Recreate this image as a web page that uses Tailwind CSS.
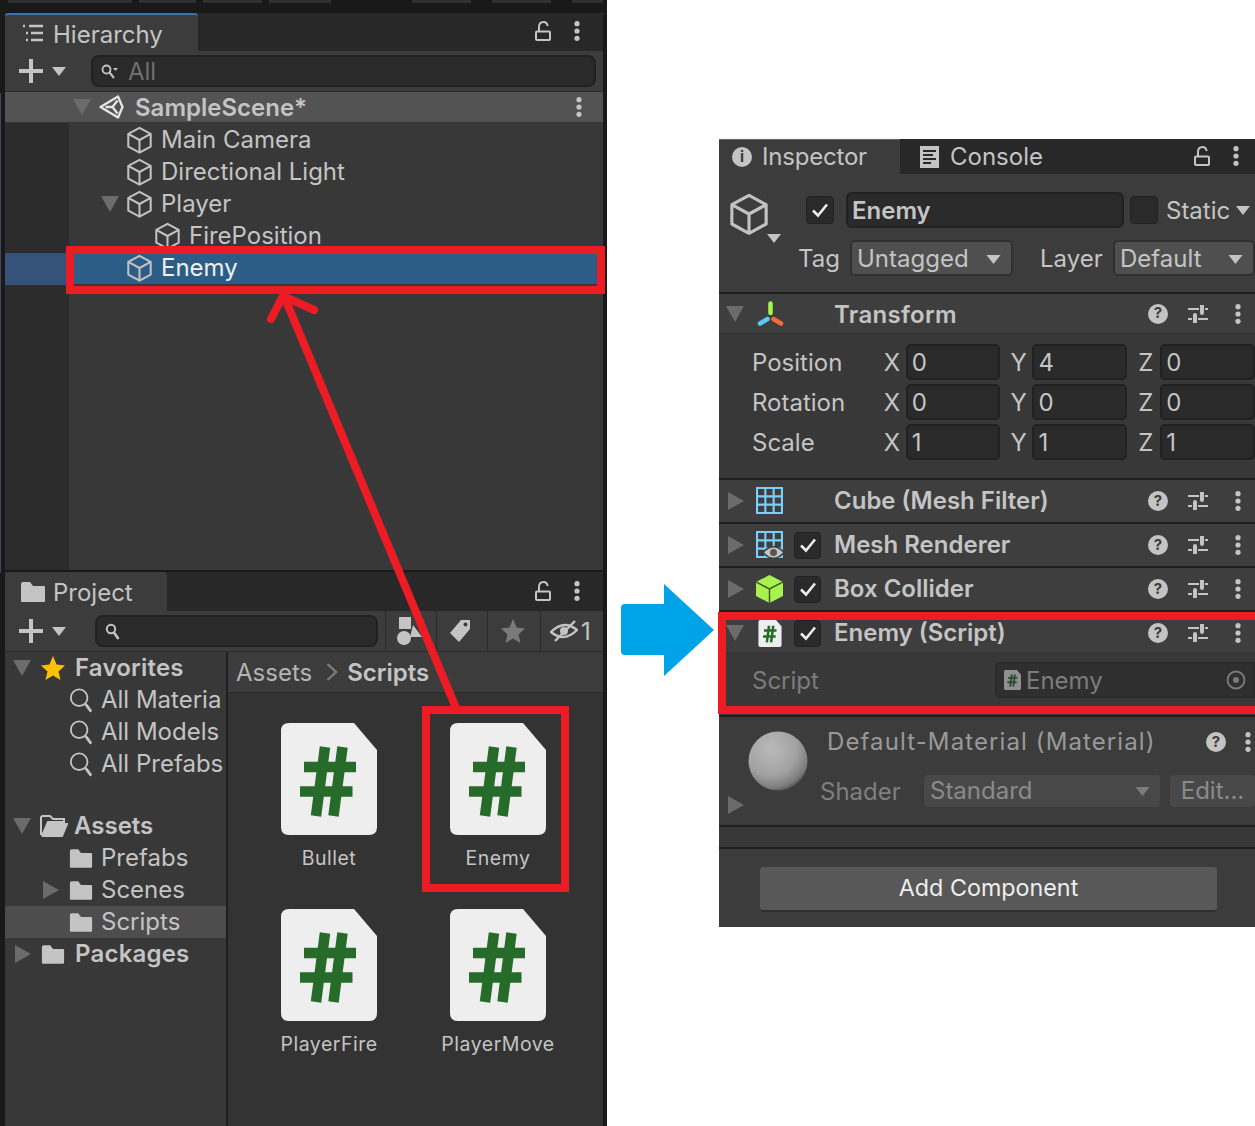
<!DOCTYPE html>
<html lang="en">
<head>
  <meta charset="UTF-8" />
  <title>Unity Editor - Enemy script</title>
  <script src="https://cdn.jsdelivr.net/npm/@tailwindcss/browser@4"></script>
</head>
<body class="bg-white">
  <!-- shared icons -->
  <svg class="hidden" xmlns="http://www.w3.org/2000/svg">
    <symbol id="cube" viewBox="0 0 28 30"><path d="M14 2 26 8.5V22L14 28.500 2 22V8.500ZM2 8.500 14 15 26 8.500M14 15V28.500" fill="none" stroke="#c2c2c2" stroke-width="2.200" stroke-linejoin="round"/></symbol>
    <symbol id="down" viewBox="0 0 18 16"><path d="M0 0H18L9 16Z" fill="#6b6b6b"/></symbol>
    <symbol id="right" viewBox="0 0 16 18"><path d="M0 0 16 9 0 18Z" fill="#6b6b6b"/></symbol>
    <symbol id="dots" viewBox="0 0 6 20"><circle cx="3" cy="2.700" r="2.600" fill="#c4c4c4"/><circle cx="3" cy="10" r="2.600" fill="#c4c4c4"/><circle cx="3" cy="17.300" r="2.600" fill="#c4c4c4"/></symbol>
    <symbol id="lock" viewBox="0 0 16 20"><rect x="1" y="10.500" width="14" height="8.500" rx="1" fill="none" stroke="#c4c4c4" stroke-width="2"/><path d="M4 10V6Q4 1 8.500 1 12 1 12.700 5" fill="none" stroke="#c4c4c4" stroke-width="2"/></symbol>
    <symbol id="sliders" viewBox="0 0 20 18"><path d="M0 4H11M17 4H20M0 14H4M10 14H20" stroke="#c4c4c4" stroke-width="2"/><path d="M14 0V8M7 10V18" stroke="#c4c4c4" stroke-width="4" stroke-linecap="round"/></symbol>
    <symbol id="folder" viewBox="0 0 26 22"><path d="M1 3Q1 1 3 1H10L13 5H24Q25 5 25 6V20Q25 21 24 21H2Q1 21 1 20Z" fill="#c4c4c4"/></symbol>
    <symbol id="search" viewBox="0 0 26 28"><circle cx="11" cy="11" r="9" fill="none" stroke="#c4c4c4" stroke-width="2"/><path d="M18 18 24 26" stroke="#c4c4c4" stroke-width="3"/></symbol>
    <symbol id="check" viewBox="0 0 18 16"><path d="M2 8.500 7 13.500 16 2.500" fill="none" stroke="#ededed" stroke-width="2.600"/></symbol>
    <symbol id="script" viewBox="0 0 96 112"><path d="M8 0H73L96 27V104Q96 112 88 112H8Q0 112 0 104V8Q0 0 8 0Z" fill="#eeeeee"/><path d="M44 24 35 93M61.500 24 52.500 93M23 44H75M19 68.500H71.500" fill="none" stroke="#266b2a" stroke-width="10.500"/></symbol>
    <symbol id="grid" viewBox="0 0 26 26"><path d="M1 1H25V25H1ZM9 1V25M17 1V25M1 9H25M1 17H25" fill="none" stroke="#79d0fb" stroke-width="2"/></symbol>
  </svg>

  <div class="relative w-[1255px] h-[1126px] overflow-hidden flex items-start font-['Inter','Liberation_Sans',sans-serif] text-[#c4c4c4]">

    <!-- left editor column -->
    <div class="w-[607px] h-[1126px] shrink-0 bg-[#191919] pl-[5px] pr-[4px] flex flex-col">
      <div class="h-[13px] flex gap-[7px] items-start -ml-[5px] pl-[8px]">
        <div class="w-[127px] h-[3px] bg-[#303030]"></div>
        <div class="w-[58px] h-[3px] bg-[#303030]"></div>
        <div class="w-[60px] h-[3px] bg-[#303030]"></div>
        <div class="w-[64px] h-[3px] bg-[#303030]"></div>
        <div class="w-[60px] h-[3px] ml-[74px] bg-[#303030]"></div>
        <div class="w-[60px] h-[3px] ml-[14px] bg-[#303030]"></div>
        <div class="w-[32px] h-[3px] ml-[14px] bg-[#303030]"></div>
      </div>

      <!-- Hierarchy -->
      <section class="h-[557px] flex flex-col bg-[#383838]">
        <div class="h-[38px] flex items-stretch bg-[#282828] rounded-t-[4px]">
          <div class="w-[193px] bg-[#3c3c3c] border-t-2 border-[#3a72b0] rounded-t-[4px] flex items-center pl-[17px] gap-[9px] text-[24px]">
            <svg class="w-[22px] h-[18px]" viewBox="0 0 22 18"><path d="M1 2H3M7 2H21M4 9H6M9 9H21M4 16H6M9 16H21" stroke="#c4c4c4" stroke-width="2.400"/></svg>
            <span class="pt-[3px]">Hierarchy</span>
          </div>
          <div class="flex-1 flex items-center justify-end gap-[23px] pr-[23px] pb-[2px]">
            <svg class="w-[16px] h-[20px]"><use href="#lock"/></svg>
            <svg class="w-[6px] h-[20px]"><use href="#dots"/></svg>
          </div>
        </div>
        <div class="h-[41px] bg-[#3c3c3c] border-b border-[#2a2a2a] flex items-center pl-[14px] pr-[7px]">
          <svg class="w-[24px] h-[24px]" viewBox="0 0 24 24"><path d="M12 0V24M0 12H24" stroke="#c4c4c4" stroke-width="4"/></svg>
          <svg class="w-[14px] h-[9px] ml-[9px]" viewBox="0 0 14 9"><path d="M0 0H14L7 9Z" fill="#c4c4c4"/></svg>
          <div class="ml-[25px] flex-1 h-[32px] rounded-[8px] bg-[#2a2a2a] border-2 border-[#212121] flex items-center pl-[8px] gap-[10px] text-[24px] text-[#6f6f6f]">
            <svg class="w-[17px] h-[15px]" viewBox="0 0 17 15"><circle cx="5.500" cy="5.500" r="4" fill="none" stroke="#c4c4c4" stroke-width="1.800"/><path d="M8.500 8.500 13 14" stroke="#c4c4c4" stroke-width="2"/><path d="M12 4H17L14.500 7Z" fill="#c4c4c4"/></svg>
            <span class="pt-[2px]">All</span>
          </div>
        </div>
        <div class="h-[31px] bg-[#535353] flex items-center pl-[68px] text-[24px] font-semibold border-b border-[#353535]">
          <svg class="w-[18px] h-[16px]"><use href="#down"/></svg>
          <svg class="w-[25px] h-[24px] ml-[8px]" viewBox="0 0 25 24"><path d="M1.500 12 19 1.500 23.500 12 19 22.500ZM6.500 12H13.500L18.500 5.500M13.500 12 18.500 18.500" fill="none" stroke="#e6e6e6" stroke-width="2.300" stroke-linejoin="round"/></svg>
          <span class="ml-[11px] pt-[2px]">SampleScene*</span>
          <svg class="w-[6px] h-[20px] ml-auto mr-[21px]"><use href="#dots"/></svg>
        </div>
        <div class="flex-1 flex min-h-0">
          <div class="w-[64px] bg-[#2c2c2c] pt-[130px]">
            <div class="h-[32px] bg-[#34527a]"></div>
          </div>
          <div class="flex-1 text-[24px] pt-[1px]">
            <div class="h-[32px] flex items-center pl-[57px] gap-[8px]"><svg class="w-[27px] h-[28px]"><use href="#cube"/></svg><span>Main Camera</span></div>
            <div class="h-[32px] flex items-center pl-[57px] gap-[8px]"><svg class="w-[27px] h-[28px]"><use href="#cube"/></svg><span>Directional Light</span></div>
            <div class="h-[32px] flex items-center pl-[32px]"><svg class="w-[18px] h-[16px]"><use href="#down"/></svg><svg class="w-[27px] h-[28px] ml-[7px]"><use href="#cube"/></svg><span class="ml-[8px]">Player</span></div>
            <div class="h-[32px] flex items-center pl-[85px] gap-[8px]"><svg class="w-[27px] h-[28px]"><use href="#cube"/></svg><span>FirePosition</span></div>
            <div class="h-[32px] flex items-center pl-[57px] gap-[8px] bg-[#2c5d87] text-[#f0f0f0]"><svg class="w-[27px] h-[28px]"><use href="#cube"/></svg><span>Enemy</span></div>
          </div>
        </div>
      </section>

      <div class="h-[2px]"></div>

      <!-- Project -->
      <section class="flex-1 flex flex-col bg-[#383838] min-h-0">
        <div class="h-[39px] flex items-stretch bg-[#282828] rounded-t-[4px]">
          <div class="w-[162px] bg-[#3c3c3c] rounded-t-[4px] flex items-center pl-[15px] gap-[7px] text-[24px]">
            <svg class="w-[26px] h-[22px]"><use href="#folder"/></svg>
            <span class="pt-[3px]">Project</span>
          </div>
          <div class="flex-1 flex items-center justify-end gap-[23px] pr-[23px] pb-[2px]">
            <svg class="w-[16px] h-[20px]"><use href="#lock"/></svg>
            <svg class="w-[6px] h-[20px]"><use href="#dots"/></svg>
          </div>
        </div>
        <div class="h-[41px] bg-[#3c3c3c] border-b border-[#2a2a2a] flex items-center pl-[14px]">
          <svg class="w-[24px] h-[24px]" viewBox="0 0 24 24"><path d="M12 0V24M0 12H24" stroke="#c4c4c4" stroke-width="4"/></svg>
          <svg class="w-[14px] h-[9px] ml-[9px]" viewBox="0 0 14 9"><path d="M0 0H14L7 9Z" fill="#c4c4c4"/></svg>
          <div class="ml-[29px] w-[283px] h-[32px] rounded-[8px] bg-[#2a2a2a] border-2 border-[#212121] flex items-center pl-[8px]">
            <svg class="w-[15px] h-[17px]" viewBox="0 0 15 17"><circle cx="6" cy="6" r="4.200" fill="none" stroke="#c4c4c4" stroke-width="2"/><path d="M9 9.500 13.500 16" stroke="#c4c4c4" stroke-width="2.600"/></svg>
          </div>
          <div class="ml-[7px] h-full flex items-stretch">
            <div class="w-[51px] border-l border-[#2a2a2a] flex items-center justify-center pr-[4px]">
              <svg class="w-[25px] h-[29px]" viewBox="0 0 25 29"><path d="M2 0H14V12H2Z" fill="#c4c4c4"/><circle cx="7" cy="21" r="7" fill="#c4c4c4"/><path d="M16 8 25 20H13Z" fill="#c4c4c4"/></svg>
            </div>
            <div class="w-[51px] border-l border-[#2a2a2a] flex items-center justify-center pr-[4px]">
              <svg class="w-[22px] h-[24px]" viewBox="0 0 22 24"><path d="M12 1H21V10L10 23 1 14Z" fill="#c4c4c4"/><circle cx="16.500" cy="5.500" r="2" fill="#3c3c3c"/></svg>
            </div>
            <div class="w-[53px] border-l border-[#2a2a2a] flex items-center justify-center pr-[2px]">
              <svg class="w-[24px] h-[24px]" viewBox="0 0 24 24"><path d="M12 0 15.500 8.500 24 9.500 17.500 15.500 19.500 24 12 19.500 4.500 24 6.500 15.500 0 9.500 8.500 8.500Z" fill="#7a7a7a"/></svg>
            </div>
            <div class="w-[63px] border-l border-[#2a2a2a] flex items-center pl-[9px] gap-[3px] text-[24px]">
              <svg class="w-[28px] h-[24px]" viewBox="0 0 28 24"><path d="M1 13Q14 0 27 11 14 24 1 13Z" fill="none" stroke="#c4c4c4" stroke-width="2.400"/><circle cx="14" cy="12" r="4" fill="#c4c4c4"/><path d="M5 22 25 2" stroke="#c4c4c4" stroke-width="2.400"/></svg>
              <span class="pt-[2px]">1</span>
            </div>
          </div>
        </div>
        <div class="flex-1 flex min-h-0">
          <!-- folder tree -->
          <div class="w-[221px] shrink-0 text-[24px] overflow-hidden">
            <div class="h-[32px] flex items-center pl-[8px] font-semibold"><svg class="w-[18px] h-[16px]"><use href="#down"/></svg><svg class="w-[24px] h-[24px] ml-[10px]" viewBox="0 0 24 24"><path d="M12 0 15.500 8.500 24 9.500 17.500 15.500 19.500 24 12 19.500 4.500 24 6.500 15.500 0 9.500 8.500 8.500Z" fill="#fdc006"/></svg><span class="ml-[10px] tracking-[0.2px]">Favorites</span></div>
            <div class="h-[32px] flex items-center pl-[64px] pr-[5px] gap-[8px] whitespace-nowrap"><svg class="w-[24px] h-[27px] shrink-0"><use href="#search"/></svg><span class="min-w-0 overflow-hidden">All Materials</span></div>
            <div class="h-[32px] flex items-center pl-[64px] gap-[8px] whitespace-nowrap"><svg class="w-[24px] h-[27px] shrink-0"><use href="#search"/></svg><span>All Models</span></div>
            <div class="h-[32px] flex items-center pl-[64px] gap-[8px] whitespace-nowrap"><svg class="w-[24px] h-[27px] shrink-0"><use href="#search"/></svg><span>All Prefabs</span></div>
            <div class="h-[30px]"></div>
            <div class="h-[32px] flex items-center pl-[8px] font-semibold"><svg class="w-[18px] h-[16px]"><use href="#down"/></svg><svg class="w-[28px] h-[22px] ml-[9px]" viewBox="0 0 28 22"><path d="M1 20V3Q1 1 3 1H10L13 4H24V7H8L2 21M3 21 8.500 9H27L22 21Z" fill="none" stroke="#c4c4c4" stroke-width="2"/><path d="M3 21 8.500 9H27L22 21Z" fill="#c4c4c4"/></svg><span class="ml-[6px]">Assets</span></div>
            <div class="h-[32px] flex items-center pl-[64px] gap-[8px]"><svg class="w-[24px] h-[21px]"><use href="#folder"/></svg><span>Prefabs</span></div>
            <div class="h-[32px] flex items-center pl-[38px]"><svg class="w-[16px] h-[18px]"><use href="#right"/></svg><svg class="w-[24px] h-[21px] ml-[10px]"><use href="#folder"/></svg><span class="ml-[8px]">Scenes</span></div>
            <div class="h-[32px] flex items-center pl-[64px] gap-[8px] bg-[#4d4d4d]"><svg class="w-[24px] h-[21px]"><use href="#folder"/></svg><span>Scripts</span></div>
            <div class="h-[32px] flex items-center pl-[10px] font-semibold"><svg class="w-[16px] h-[18px]"><use href="#right"/></svg><svg class="w-[24px] h-[21px] ml-[10px]"><use href="#folder"/></svg><span class="ml-[10px] tracking-[0.2px]">Packages</span></div>
          </div>
          <div class="w-[2px] shrink-0 bg-[#1f1f1f]"></div>
          <!-- asset grid -->
          <div class="flex-1 min-w-0 flex flex-col bg-[#333333]">
            <div class="h-[41px] bg-[#3c3c3c] border-b border-[#2a2a2a] flex items-center pl-[8px] text-[24px]">
              <span class="text-[#b4b4b4] pt-[2px]">Assets</span>
              <svg class="w-[12px] h-[18px] ml-[14px]" viewBox="0 0 12 18"><path d="M1.500 1 10 9 1.500 17" fill="none" stroke="#7c7c7c" stroke-width="2.400"/></svg>
              <span class="ml-[9px] font-semibold pt-[2px]">Scripts</span>
            </div>
            <div class="pl-[53px] pt-[30px] grid grid-cols-[169px_169px] grid-rows-[186px_186px] text-[19.500px] tracking-[0.5px]">
              <div class="w-[96px] flex flex-col items-center"><svg class="w-[96px] h-[112px] shrink-0"><use href="#script"/></svg><span class="mt-[9px]">Bullet</span></div>
              <div class="w-[96px] flex flex-col items-center"><svg class="w-[96px] h-[112px] shrink-0"><use href="#script"/></svg><span class="mt-[9px]">Enemy</span></div>
              <div class="w-[96px] flex flex-col items-center"><svg class="w-[96px] h-[112px] shrink-0"><use href="#script"/></svg><span class="mt-[9px] whitespace-nowrap">PlayerFire</span></div>
              <div class="w-[96px] flex flex-col items-center"><svg class="w-[96px] h-[112px] shrink-0"><use href="#script"/></svg><span class="mt-[9px] whitespace-nowrap">PlayerMove</span></div>
            </div>
          </div>
        </div>
      </section>
    </div>

    <!-- Inspector -->
    <section class="ml-[112px] mt-[139px] w-[536px] h-[788px] shrink-0 bg-[#3c3c3c] flex flex-col overflow-hidden text-[24px]">
      <div class="h-[35px] shrink-0 flex items-stretch bg-[#282828]">
        <div class="w-[181px] bg-[#3c3c3c] border-t border-[#3a72b0] flex items-center pl-[13px] gap-[10px]">
          <span class="w-[20px] h-[20px] rounded-full bg-[#c4c4c4] text-[#3c3c3c] text-[15px] font-bold flex items-center justify-center">i</span>
          <span class="tracking-[-0.2px]">Inspector</span>
        </div>
        <div class="flex items-center pl-[19px] gap-[10px]">
          <svg class="w-[21px] h-[22px]" viewBox="0 0 21 22"><path d="M1 0H20V22H1Z" fill="#c4c4c4"/><path d="M4 5H17M4 9H14M4 13H17M4 17H12" stroke="#282828" stroke-width="2"/></svg>
          <span>Console</span>
        </div>
        <div class="flex-1 flex items-center justify-end gap-[23px] pr-[16px] pb-[2px]">
          <svg class="w-[16px] h-[20px]"><use href="#lock"/></svg>
          <svg class="w-[6px] h-[20px]"><use href="#dots"/></svg>
        </div>
      </div>

      <!-- object header -->
      <div class="h-[118px] shrink-0 relative pl-[10px] pt-[18px] flex">
        <div class="w-[50px] shrink-0 relative">
          <svg class="w-[40px] h-[44px]"><use href="#cube"/></svg>
          <svg class="absolute left-[38px] top-[42px] w-[14px] h-[9px]" viewBox="0 0 14 9"><path d="M0 0H14L7 9Z" fill="#c4c4c4"/></svg>
        </div>
        <div class="flex-1 flex flex-col">
          <div class="h-[36px] flex items-center pl-[27px]">
            <div class="w-[28px] h-[28px] rounded-[4px] bg-[#2a2a2a] border border-[#212121] flex items-center justify-center"><svg class="w-[18px] h-[16px]"><use href="#check"/></svg></div>
            <div class="ml-[12px] w-[278px] h-[36px] rounded-[6px] bg-[#2a2a2a] border-2 border-[#212121] flex items-center pl-[4px] pt-[2px] font-semibold">Enemy</div>
            <div class="ml-[6px] w-[28px] h-[28px] rounded-[4px] bg-[#2a2a2a] border border-[#212121]"></div>
            <span class="ml-[8px] pt-[2px]">Static</span>
            <svg class="w-[14px] h-[9px] ml-[6px] shrink-0" viewBox="0 0 14 9"><path d="M0 0H14L7 9Z" fill="#c4c4c4"/></svg>
          </div>
          <div class="h-[36px] mt-[12px] flex items-center pl-[19px]">
            <span class="w-[52px] pt-[2px]">Tag</span>
            <div class="w-[163px] h-[36px] rounded-[5px] bg-[#4f4f4f] border-2 border-[#303030] flex items-center pl-[5px] pt-[2px]"><span>Untagged</span><svg class="w-[15px] h-[9px] ml-auto mr-[10px]" viewBox="0 0 14 9"><path d="M0 0H14L7 9Z" fill="#c4c4c4"/></svg></div>
            <span class="ml-[27px] w-[73px] pt-[2px]">Layer</span>
            <div class="w-[142px] h-[36px] rounded-[5px] bg-[#4f4f4f] border-2 border-[#303030] flex items-center pl-[5px] pt-[2px]"><span>Default</span><svg class="w-[15px] h-[9px] ml-auto mr-[10px]" viewBox="0 0 14 9"><path d="M0 0H14L7 9Z" fill="#c4c4c4"/></svg></div>
          </div>
        </div>
      </div>
      <div class="h-[2px] shrink-0 bg-[#1f1f1f]"></div>

      <!-- Transform -->
      <div class="h-[40px] shrink-0 flex items-center bg-[#3e3e3e] border-b border-[#333333]">
        <div class="w-[36px] pl-[7px]"><svg class="block w-[18px] h-[16px]"><use href="#down"/></svg></div>
        <div class="w-[79px]"><svg class="block w-[27px] h-[25px] ml-[2px]" viewBox="0 0 27 25"><path d="M13.500 2.500V12" stroke="#a4f54d" stroke-width="4.500" stroke-linecap="round"/><path d="M10.500 18 3 22.500" stroke="#5cc8f5" stroke-width="4.500" stroke-linecap="round"/><path d="M16.500 18 24 22.500" stroke="#f26a36" stroke-width="4.500" stroke-linecap="round"/></svg></div>
        <span class="flex-1 font-semibold pt-[2px] tracking-[0.3px]">Transform</span>
        <div class="w-[40px] flex justify-center"><span class="w-[20px] h-[20px] rounded-full bg-[#c4c4c4] text-[#3c3c3c] text-[15px] font-bold flex items-center justify-center">?</span></div>
        <div class="w-[40px] flex justify-center"><svg class="w-[20px] h-[18px]"><use href="#sliders"/></svg></div>
        <div class="w-[37px] flex justify-center pl-[3px]"><svg class="w-[6px] h-[20px]"><use href="#dots"/></svg></div>
      </div>
      <div class="h-[144px] shrink-0 bg-[#383838] pt-[10px] pl-[33px] flex flex-col gap-[4px]">
        <div class="h-[36px] flex items-center"><span class="w-[132px] pt-[2px]">Position</span><span class="w-[22px] pt-[2px]">X</span><div class="w-[95px] h-[36px] rounded-[5px] bg-[#2a2a2a] border-2 border-[#212121] flex items-center pl-[4px] pt-[2px]">0</div><span class="w-[32px] pl-[10px] pt-[2px]">Y</span><div class="w-[95px] h-[36px] rounded-[5px] bg-[#2a2a2a] border-2 border-[#212121] flex items-center pl-[4px] pt-[2px]">4</div><span class="w-[33px] pl-[11px] pt-[2px]">Z</span><div class="w-[95px] h-[36px] rounded-[5px] bg-[#2a2a2a] border-2 border-[#212121] flex items-center pl-[4px] pt-[2px]">0</div></div>
        <div class="h-[36px] flex items-center"><span class="w-[132px] pt-[2px]">Rotation</span><span class="w-[22px] pt-[2px]">X</span><div class="w-[95px] h-[36px] rounded-[5px] bg-[#2a2a2a] border-2 border-[#212121] flex items-center pl-[4px] pt-[2px]">0</div><span class="w-[32px] pl-[10px] pt-[2px]">Y</span><div class="w-[95px] h-[36px] rounded-[5px] bg-[#2a2a2a] border-2 border-[#212121] flex items-center pl-[4px] pt-[2px]">0</div><span class="w-[33px] pl-[11px] pt-[2px]">Z</span><div class="w-[95px] h-[36px] rounded-[5px] bg-[#2a2a2a] border-2 border-[#212121] flex items-center pl-[4px] pt-[2px]">0</div></div>
        <div class="h-[36px] flex items-center"><span class="w-[132px] pt-[2px]">Scale</span><span class="w-[22px] pt-[2px]">X</span><div class="w-[95px] h-[36px] rounded-[5px] bg-[#2a2a2a] border-2 border-[#212121] flex items-center pl-[4px] pt-[2px]">1</div><span class="w-[32px] pl-[10px] pt-[2px]">Y</span><div class="w-[95px] h-[36px] rounded-[5px] bg-[#2a2a2a] border-2 border-[#212121] flex items-center pl-[4px] pt-[2px]">1</div><span class="w-[33px] pl-[11px] pt-[2px]">Z</span><div class="w-[95px] h-[36px] rounded-[5px] bg-[#2a2a2a] border-2 border-[#212121] flex items-center pl-[4px] pt-[2px]">1</div></div>
      </div>
      <div class="h-[2px] shrink-0 bg-[#1f1f1f]"></div>

      <!-- Mesh Filter -->
      <div class="h-[42px] shrink-0 flex items-center bg-[#3e3e3e]">
        <div class="w-[36px] pl-[9px]"><svg class="block w-[16px] h-[18px]"><use href="#right"/></svg></div>
        <div class="w-[79px]"><svg class="block w-[27px] h-[27px] ml-[1px] mb-[2px]"><use href="#grid"/></svg></div>
        <span class="flex-1 font-semibold">Cube (Mesh Filter)</span>
        <div class="w-[40px] flex justify-center"><span class="w-[20px] h-[20px] rounded-full bg-[#c4c4c4] text-[#3c3c3c] text-[15px] font-bold flex items-center justify-center">?</span></div>
        <div class="w-[40px] flex justify-center"><svg class="w-[20px] h-[18px]"><use href="#sliders"/></svg></div>
        <div class="w-[37px] flex justify-center pl-[3px]"><svg class="w-[6px] h-[20px]"><use href="#dots"/></svg></div>
      </div>
      <div class="h-[2px] shrink-0 bg-[#1f1f1f]"></div>

      <!-- Mesh Renderer -->
      <div class="h-[42px] shrink-0 flex items-center bg-[#3e3e3e]">
        <div class="w-[36px] pl-[9px]"><svg class="block w-[16px] h-[18px]"><use href="#right"/></svg></div>
        <div class="w-[39px] relative"><svg class="block w-[27px] h-[27px] ml-[1px] mb-[2px]"><use href="#grid"/></svg><svg class="absolute left-[7px] top-[14px] w-[23px] h-[15px]" viewBox="0 0 23 15"><path d="M1 7.500Q11.500 -4 22 7.500 11.500 19 1 7.500Z" fill="#c4c4c4" stroke="#3e3e3e" stroke-width="1.500"/><circle cx="11.500" cy="7.500" r="3.500" fill="#555555"/></svg></div>
        <div class="w-[40px]"><div class="w-[27px] h-[27px] rounded-[4px] bg-[#2a2a2a] border border-[#212121] flex items-center justify-center"><svg class="w-[18px] h-[16px]"><use href="#check"/></svg></div></div>
        <span class="flex-1 font-semibold">Mesh Renderer</span>
        <div class="w-[40px] flex justify-center"><span class="w-[20px] h-[20px] rounded-full bg-[#c4c4c4] text-[#3c3c3c] text-[15px] font-bold flex items-center justify-center">?</span></div>
        <div class="w-[40px] flex justify-center"><svg class="w-[20px] h-[18px]"><use href="#sliders"/></svg></div>
        <div class="w-[37px] flex justify-center pl-[3px]"><svg class="w-[6px] h-[20px]"><use href="#dots"/></svg></div>
      </div>
      <div class="h-[2px] shrink-0 bg-[#1f1f1f]"></div>

      <!-- Box Collider -->
      <div class="h-[42px] shrink-0 flex items-center bg-[#3e3e3e]">
        <div class="w-[36px] pl-[9px]"><svg class="block w-[16px] h-[18px]"><use href="#right"/></svg></div>
        <div class="w-[39px]"><svg class="block w-[27px] h-[28px] ml-[1px]" viewBox="0 0 27 28"><path d="M13.500 0 27 7V21L13.500 28 0 21V7Z" fill="#a8f24e"/><path d="M0 7 13.500 14 27 7M13.500 14V28" fill="none" stroke="#3e5a22" stroke-width="1.500"/></svg></div>
        <div class="w-[40px]"><div class="w-[27px] h-[27px] rounded-[4px] bg-[#2a2a2a] border border-[#212121] flex items-center justify-center"><svg class="w-[18px] h-[16px]"><use href="#check"/></svg></div></div>
        <span class="flex-1 font-semibold">Box Collider</span>
        <div class="w-[40px] flex justify-center"><span class="w-[20px] h-[20px] rounded-full bg-[#c4c4c4] text-[#3c3c3c] text-[15px] font-bold flex items-center justify-center">?</span></div>
        <div class="w-[40px] flex justify-center"><svg class="w-[20px] h-[18px]"><use href="#sliders"/></svg></div>
        <div class="w-[37px] flex justify-center pl-[3px]"><svg class="w-[6px] h-[20px]"><use href="#dots"/></svg></div>
      </div>
      <div class="h-[2px] shrink-0 bg-[#1f1f1f]"></div>

      <!-- Enemy (Script) -->
      <div class="h-[41px] shrink-0 flex items-center bg-[#3e3e3e] border-b border-[#333333] pt-[2px]">
        <div class="w-[36px] pl-[7px]"><svg class="block w-[18px] h-[16px]"><use href="#down"/></svg></div>
        <div class="w-[39px]"><svg class="block w-[24px] h-[27px] ml-[3px]"><use href="#script"/></svg></div>
        <div class="w-[40px]"><div class="w-[27px] h-[27px] rounded-[4px] bg-[#2a2a2a] border border-[#212121] flex items-center justify-center"><svg class="w-[18px] h-[16px]"><use href="#check"/></svg></div></div>
        <span class="flex-1 font-semibold">Enemy (Script)</span>
        <div class="w-[40px] flex justify-center"><span class="w-[20px] h-[20px] rounded-full bg-[#c4c4c4] text-[#3c3c3c] text-[15px] font-bold flex items-center justify-center">?</span></div>
        <div class="w-[40px] flex justify-center"><svg class="w-[20px] h-[18px]"><use href="#sliders"/></svg></div>
        <div class="w-[37px] flex justify-center pl-[3px]"><svg class="w-[6px] h-[20px]"><use href="#dots"/></svg></div>
      </div>
      <div class="h-[62px] shrink-0 bg-[#383838] pl-[33px] pt-[9px] flex text-[#7c7c7c]">
        <span class="w-[243px] h-[36px] flex items-center pt-[2px]">Script</span>
        <div class="flex-1 h-[36px] rounded-l-[5px] bg-[#2f2f2f] border-2 border-[#2a2a2a] flex items-center pl-[7px]">
          <svg class="w-[17px] h-[22px] opacity-50"><use href="#script"/></svg>
          <span class="ml-[5px] pt-[2px]">Enemy</span>
          <svg class="w-[20px] h-[20px] ml-auto mr-[7px]" viewBox="0 0 20 20"><circle cx="10" cy="10" r="8.500" fill="none" stroke="#7c7c7c" stroke-width="1.800"/><circle cx="10" cy="10" r="3" fill="#7c7c7c"/></svg>
        </div>
      </div>
      <div class="h-[2px] shrink-0 bg-[#1f1f1f]"></div>

      <!-- Material -->
      <div class="h-[108px] shrink-0 relative flex">
        <div class="w-[100px] shrink-0 relative">
          <svg class="absolute left-[29px] top-[14px] w-[60px] h-[60px]" viewBox="0 0 60 60"><defs><radialGradient id="ball" cx="0.380" cy="0.300" r="0.800"><stop offset="0" stop-color="#bababa"/><stop offset="0.550" stop-color="#a2a2a2"/><stop offset="0.820" stop-color="#7c7c7c"/><stop offset="1" stop-color="#303030"/></radialGradient></defs><circle cx="30" cy="30" r="29.500" fill="url(#ball)"/></svg>
          <svg class="absolute left-[9px] top-[79px] w-[16px] h-[18px]"><use href="#right"/></svg>
        </div>
        <div class="flex-1 flex flex-col text-[#999999] min-w-0">
          <div class="h-[50px] flex items-center pl-[8px] tracking-[1.100px]">
            <span class="whitespace-nowrap">Default-Material (Material)</span>
            <span class="ml-auto w-[20px] h-[20px] rounded-full bg-[#c4c4c4] text-[#3c3c3c] text-[15px] font-bold tracking-normal flex items-center justify-center shrink-0">?</span>
            <svg class="w-[6px] h-[20px] ml-[19px] mr-[4px] shrink-0"><use href="#dots"/></svg>
          </div>
          <div class="h-[32px] mt-[8px] flex items-center pl-[1px]">
            <span class="w-[104px] text-[#7f7f7f] pt-[2px]">Shader</span>
            <div class="w-[236px] h-[32px] rounded-[4px] bg-[#484848] flex items-center pl-[6px] text-[#8a8a8a]"><span>Standard</span><svg class="w-[15px] h-[9px] ml-auto mr-[10px]" viewBox="0 0 14 9"><path d="M0 0H14L7 9Z" fill="#7c7c7c"/></svg></div>
            <div class="ml-[10px] w-[85px] h-[32px] rounded-[4px] bg-[#484848] flex items-center justify-center text-[#8a8a8a]">Edit...</div>
          </div>
        </div>
      </div>
      <div class="h-[2px] shrink-0 bg-[#1f1f1f]"></div>
      <div class="h-[20px] shrink-0 bg-[#383838]"></div>
      <div class="h-[2px] shrink-0 bg-[#1f1f1f]"></div>
      <div class="flex-1 pt-[18px] pl-[41px]">
        <div class="w-[457px] h-[45px] rounded-[4px] bg-[#585858] border-b-2 border-[#2e2e2e] flex items-center justify-center text-[23.300px] text-[#eeeeee]">Add Component</div>
      </div>
    </section>

    <!-- annotations over the screenshots -->
    <div class="absolute left-0 top-[93px] w-px h-[480px] bg-[#3b4a60]"></div>
    <div class="absolute left-[66px] top-[246px] w-[539px] h-[48px] border-[8px] border-[#ed1c24]"></div>
    <div class="absolute left-[422px] top-[706px] w-[147px] h-[186px] border-[8px] border-[#ed1c24]"></div>
    <div class="absolute left-[718px] top-[612px] w-[537px] h-[102px] border-[8px] border-r-0 border-[#ed1c24]"></div>
    <svg class="absolute left-0 top-0 w-[1255px] h-[1126px] pointer-events-none" viewBox="0 0 1255 1126">
      <path d="M456 708 284 296" fill="none" stroke="#ed1c24" stroke-width="8"/>
      <path d="M271 319 283 296 314 310" fill="none" stroke="#ed1c24" stroke-width="8" stroke-linecap="round"/>
      <path d="M625 604H664V584L714 630 664 676V655H625Q621 655 621 651V608Q621 604 625 604Z" fill="#00a2e8"/>
    </svg>
  </div>
</body>
</html>
